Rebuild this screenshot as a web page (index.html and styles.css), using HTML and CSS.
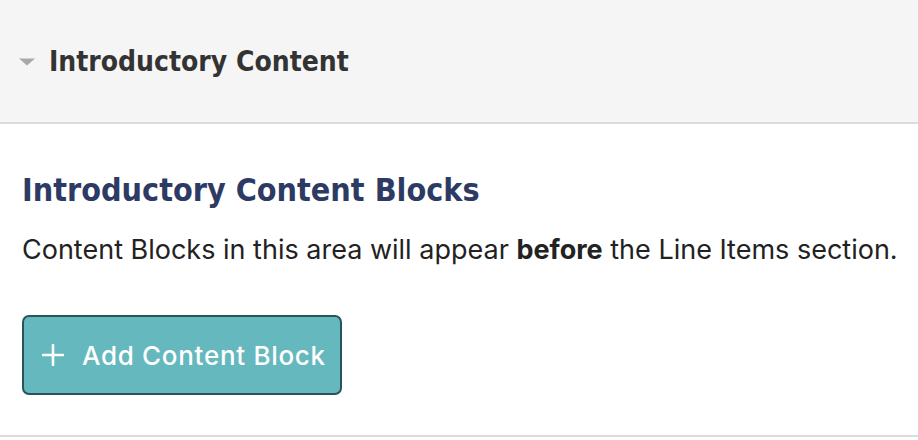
FILE: index.html
```html
<!DOCTYPE html>
<html>
<head>
<meta charset="utf-8">
<link rel="stylesheet" href="styles.css">
</head>
<body>
<section class="panel">
  <header class="panel-head">
    <svg class="caret" width="16" height="8" viewBox="0 0 16 8"><path d="M0 0.5H16L8 7.5Z" fill="#a8a8a8"/></svg>
    <h2 class="panel-title">Introductory Content</h2>
  </header>
  <div class="panel-body">
    <h3 class="blocks-title">Introductory Content Blocks</h3>
    <p class="blocks-desc">Content Blocks in this area will appear <strong>before</strong> the Line Items section.</p>
    <button class="add-btn" type="button">
      <svg class="plus" width="22" height="22" viewBox="0 0 22 22"><path d="M11 1V21M1 11H21" stroke="#fff" stroke-width="2.6" stroke-linecap="round"/></svg>
      <span>Add Content Block</span>
    </button>
  </div>
</section>
</body>
</html>
```
FILE: styles.css
```css
html, body {
  margin: 0;
  padding: 0;
  background: #fff;
}
.panel {
  width: 918px;
  border-bottom: 2px solid #dcdcdc;
}
.panel-head {
  display: flex;
  align-items: center;
  height: 124px;
  padding-left: 19px;
  background: #f5f5f5;
  border-bottom: 2px solid #dcdcdc;
  box-sizing: border-box;
}
.caret {
  margin-right: 14px;
  margin-top: 2px;
}
.panel-title {
  margin: 0;
  font-family: "DejaVu Sans Condensed", "DejaVu Sans", sans-serif;
  font-weight: bold;
  font-size: 28px;
  color: #333;
  white-space: nowrap;
}
.panel-body {
  padding: 46px 22px 40px;
}
.blocks-title {
  margin: 0;
  font-family: "DejaVu Sans Condensed", "DejaVu Sans", sans-serif;
  font-weight: bold;
  font-size: 32px;
  color: #2d3a63;
  line-height: 40px;
  white-space: nowrap;
}
.blocks-desc {
  margin: 22px 0 0;
  font-family: Inter, sans-serif;
  font-size: 27px;
  line-height: 36px;
  color: #222;
  white-space: nowrap;
}
.blocks-desc strong {
  font-weight: 700;
}
.add-btn {
  margin-top: 47px;
  display: flex;
  align-items: center;
  gap: 18px;
  width: 320px;
  height: 80px;
  padding: 0 18px;
  background: #65b8bd;
  border: 2px solid #2a5457;
  border-radius: 7px;
  box-sizing: border-box;
  font-family: Inter, sans-serif;
  font-size: 26px;
  letter-spacing: 0.7px;
  font-weight: 500;
  color: #fff;
  white-space: nowrap;
}
.plus {
  flex: none;
}
```
